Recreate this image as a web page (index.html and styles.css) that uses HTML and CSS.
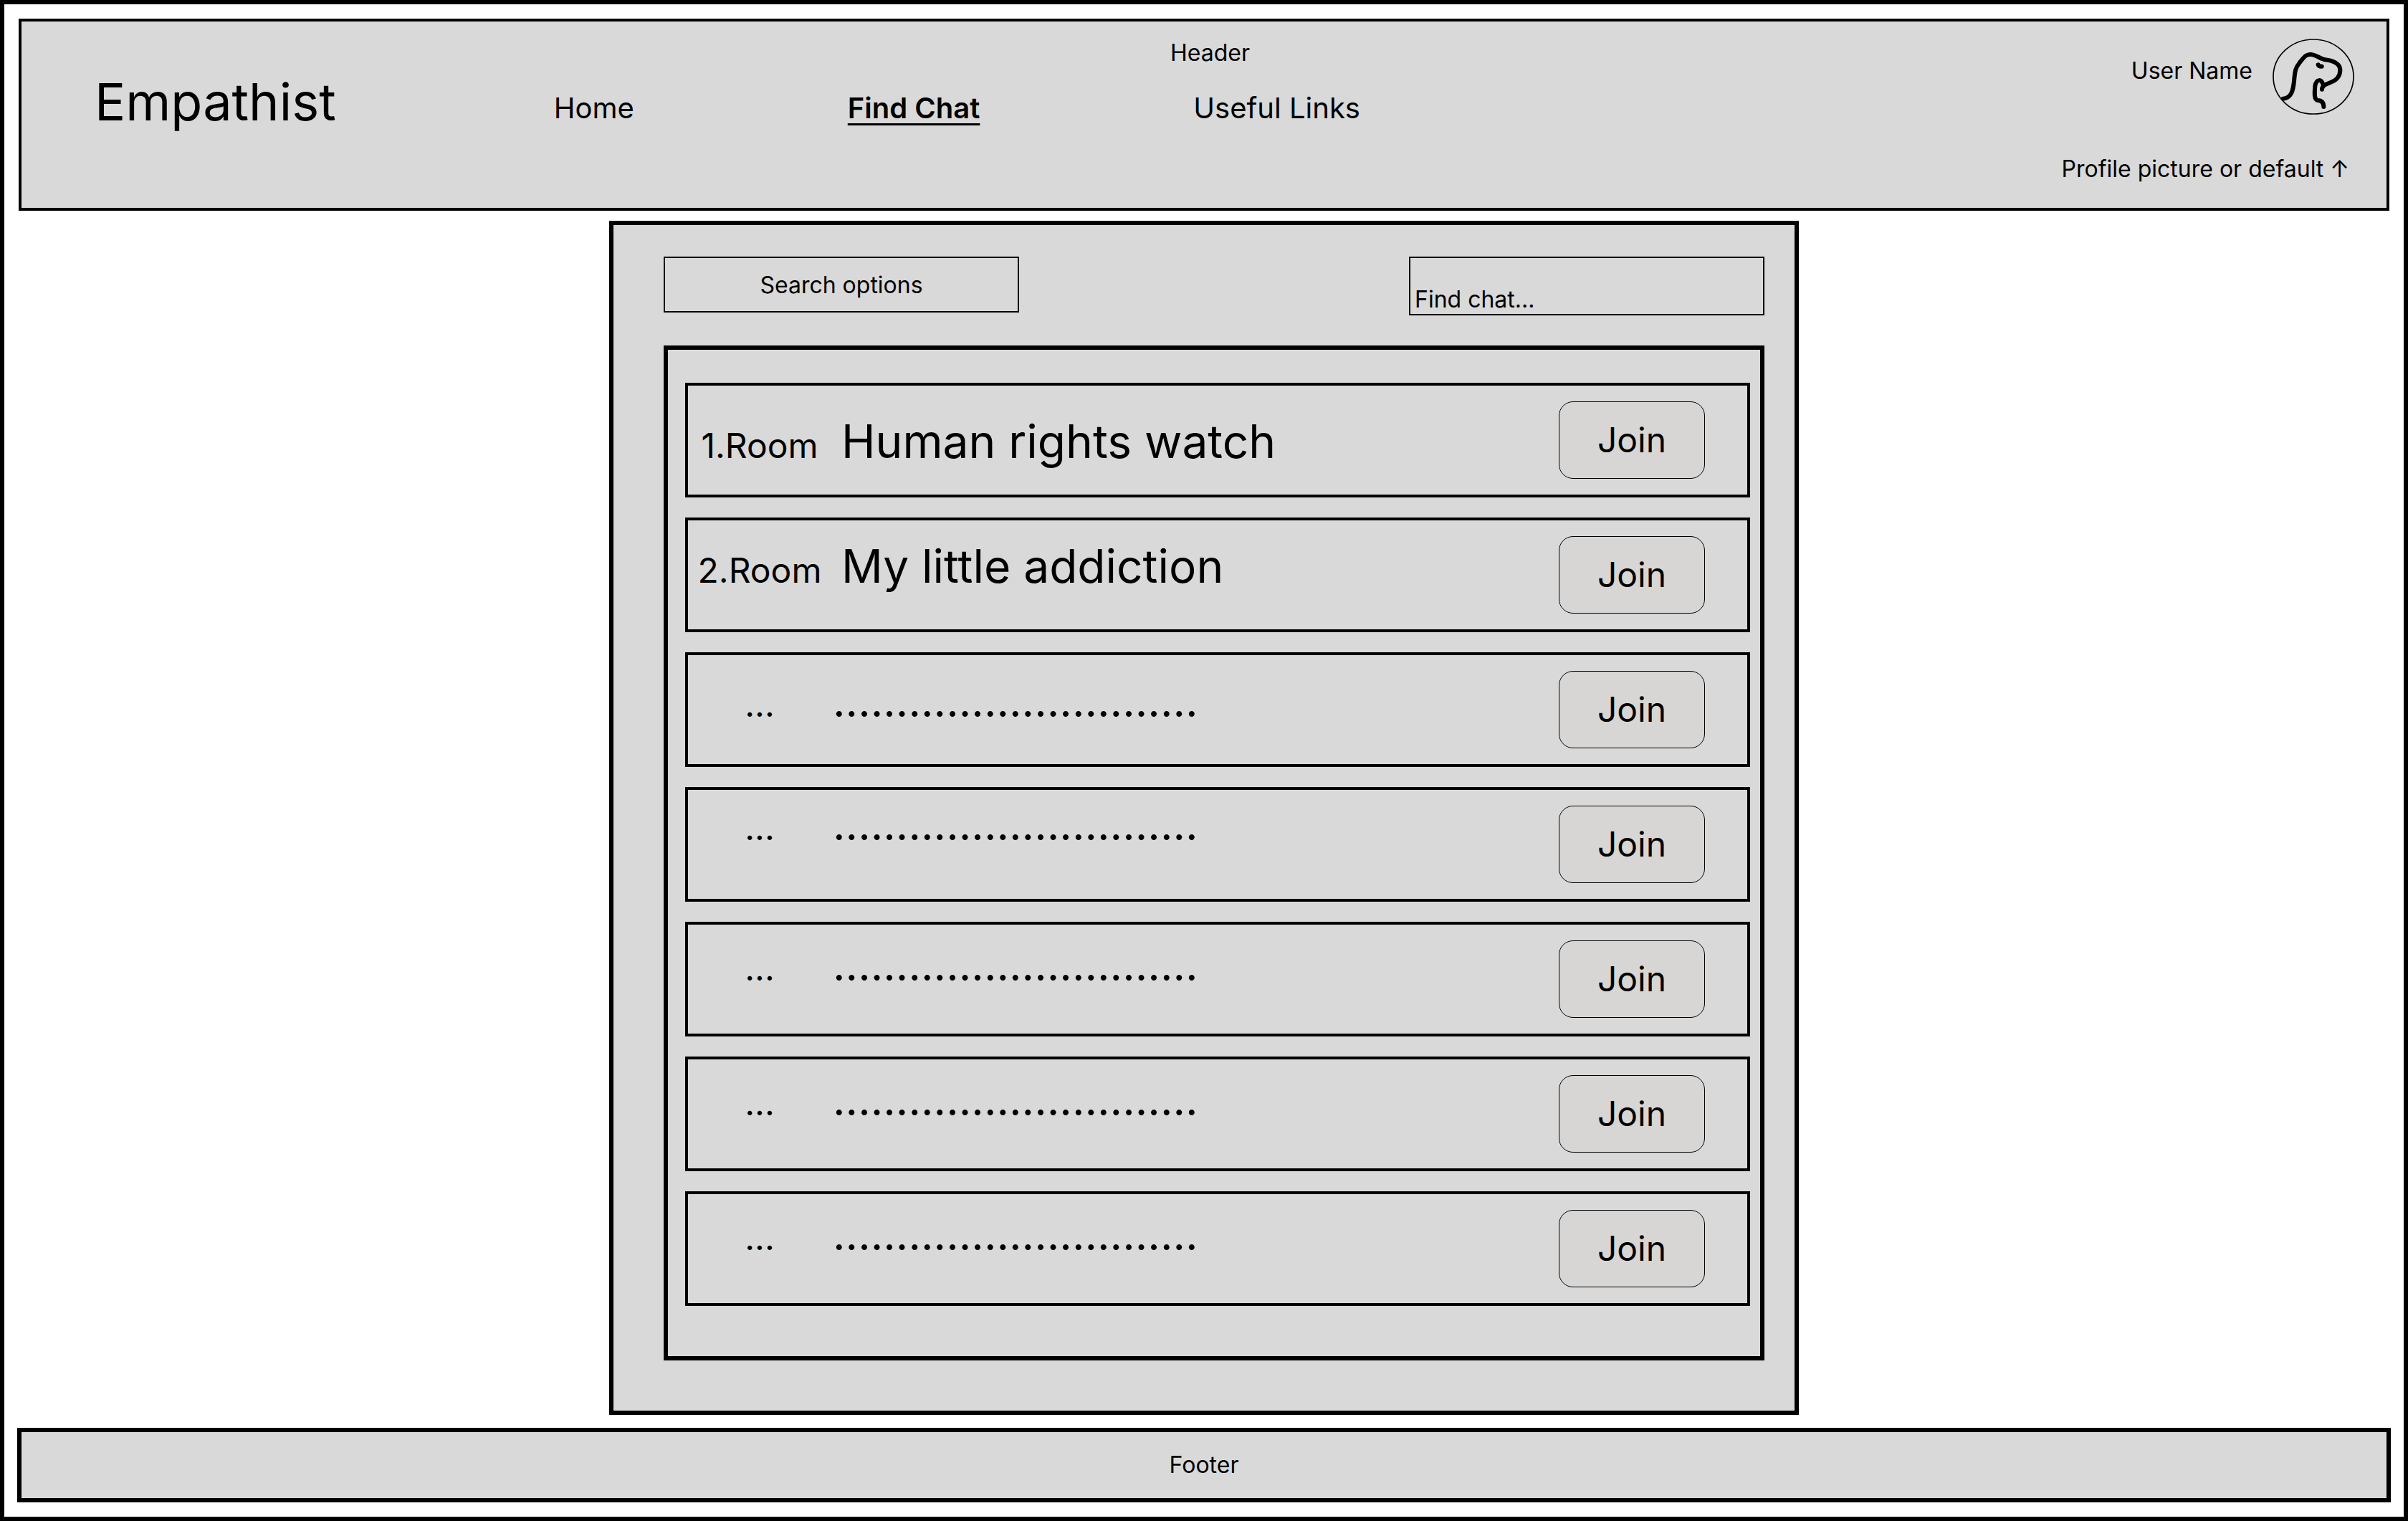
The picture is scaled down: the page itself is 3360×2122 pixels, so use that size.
FILE: index.html
```html
<!DOCTYPE html>
<html lang="en">
<head>
  <meta charset="utf-8">
  <meta name="viewport" content="width=device-width, initial-scale=1">
  <title>Empathist – Find Chat</title>
  <link rel="stylesheet" href="styles.css">
</head>
<body class="page">
  <header class="header">
    <span class="header-label">Header</span>
    <div class="header-main">
      <span class="brand">Empathist</span>
      <nav class="nav">
        <a class="nav-link" href="#home">Home</a>
        <a class="nav-link nav-link-current" href="#find-chat" aria-current="page">Find Chat</a>
        <a class="nav-link" href="#links">Useful Links</a>
      </nav>
    </div>
    <div class="profile">
      <div class="profile-user">
        <span class="profile-name">User Name</span>
        <svg class="avatar" viewBox="94 72 342 318" role="img" aria-label="Profile picture">
          <ellipse cx="265" cy="231" rx="168" ry="156" fill="none" stroke="#000" stroke-width="5"/>
          <g fill="none" stroke="#000" stroke-width="18" stroke-linecap="round" stroke-linejoin="round">
            <path d="M138 323C173 321 180 288 184 250C188 205 190 194 206 174C229 143 238 136 256 138C276 140 294 156 314 160C334 162 344 164 360 174C376 184 380 202 374 222C362 252 334 254 310 267C304 272 301 276 301 284"/>
            <path d="M304 260C299 240 277 240 272 270C269 305 268 328 284 330C301 331 308 342 308 357"/>
            <path d="M285 181Q287 188 300 188"/>
          </g>
        </svg>
      </div>
      <span class="profile-caption">Profile picture or default ↑</span>
    </div>
  </header>

  <main class="panel">
    <div class="toolbar">
      <button class="search-options" type="button">Search options</button>
      <input class="search-input" type="text" placeholder="Find chat..." aria-label="Find chat">
    </div>
    <ul class="rooms">
      <li class="room">
        <div class="room-title">
          <span class="room-number">1.Room</span>
          <span class="room-name">Human rights watch</span>
        </div>
        <button class="join" type="button">Join</button>
      </li>
      <li class="room room-raised">
        <div class="room-title">
          <span class="room-number">2.Room</span>
          <span class="room-name">My little addiction</span>
        </div>
        <button class="join" type="button">Join</button>
      </li>
      <li class="room room-empty room-raised">
        <div class="room-title">
          <span class="room-number">...</span>
          <span class="room-name">.............................</span>
        </div>
        <button class="join" type="button">Join</button>
      </li>
      <li class="room room-empty room-top">
        <div class="room-title">
          <span class="room-number">...</span>
          <span class="room-name">.............................</span>
        </div>
        <button class="join" type="button">Join</button>
      </li>
      <li class="room room-empty room-high">
        <div class="room-title">
          <span class="room-number">...</span>
          <span class="room-name">.............................</span>
        </div>
        <button class="join" type="button">Join</button>
      </li>
      <li class="room room-empty room-high">
        <div class="room-title">
          <span class="room-number">...</span>
          <span class="room-name">.............................</span>
        </div>
        <button class="join" type="button">Join</button>
      </li>
      <li class="room room-empty room-high">
        <div class="room-title">
          <span class="room-number">...</span>
          <span class="room-name">.............................</span>
        </div>
        <button class="join" type="button">Join</button>
      </li>
    </ul>
  </main>

  <footer class="footer">Footer</footer>
</body>
</html>
```
FILE: styles.css
```css
* {
  box-sizing: border-box;
}

.page {
  display: flex;
  flex-direction: column;
  min-height: 100vh;
  margin: 0;
  padding: 20px 18px;
  border: 6px solid #000;
  background: #fff;
  color: #000;
  font-family: Inter, "Liberation Sans", sans-serif;
  font-size: 32px;
  line-height: 40px;
}

button,
input {
  margin: 0;
  border-radius: 0;
  color: inherit;
  font: inherit;
}

/* Header */
.header {
  display: grid;
  grid-template-columns: 1fr auto;
  margin: 0 2px 14px;
  padding: 24px 45px 34px 102px;
  border: 4px solid #000;
  background: #d9d9d9;
}

.header-label {
  grid-area: 1 / 1 / 2 / 3;
  justify-self: center;
  padding-right: 40px;
}

.header-main {
  grid-area: 1 / 1 / 2 / 2;
  display: flex;
  align-items: flex-start;
  gap: 304px;
  padding-top: 44px;
}

.brand {
  font-size: 72px;
  line-height: 88px;
}

.nav {
  display: flex;
  gap: 298px;
  padding-top: 29px;
  font-size: 40px;
  line-height: 48px;
}

.nav-link {
  color: inherit;
  text-decoration: none;
}

.nav-link-current {
  font-weight: 600;
  text-decoration: underline 3px;
  text-decoration-skip-ink: none;
  text-underline-offset: 7px;
}

.profile {
  grid-area: 1 / 2 / 2 / 3;
  display: flex;
  flex-direction: column;
  align-items: flex-end;
  gap: 56px;
}

.profile-user {
  display: flex;
  align-items: flex-start;
  gap: 28px;
}

.profile-name {
  padding-top: 25px;
}

.avatar {
  width: 114px;
  height: 106px;
}

.profile-caption {
  padding-right: 7px;
}

/* Chat panel */
.panel {
  width: 100%;
  max-width: 1660px;
  margin: 0 auto 18px;
  padding: 44px 42px 70px 70px;
  border: 6px solid #000;
  background: #d9d9d9;
}

.toolbar {
  display: flex;
  align-items: flex-start;
  justify-content: space-between;
  gap: 40px;
  margin-bottom: 42px;
}

.search-options,
.search-input {
  width: 496px;
  border: 2px solid #000;
  background: transparent;
}

.search-options {
  padding: 18px 16px 16px;
}

.search-input {
  padding: 38px 6px 0;
  line-height: 40px;
}

.search-input::placeholder {
  color: #000;
  opacity: 1;
}

.rooms {
  display: flex;
  flex-direction: column;
  gap: 28px;
  margin: 0;
  padding: 46px 14px 70px 24px;
  border: 6px solid #000;
  list-style: none;
}

.room {
  display: flex;
  align-items: flex-start;
  justify-content: space-between;
  padding: 22px 59px 22px 0;
  border: 4px solid #000;
}

/* The top margin sets how high the title sits in its row */
.room-title {
  display: flex;
  align-items: baseline;
  gap: 14px;
  margin-top: 24px;
  line-height: 64px;
}

.room-raised .room-title {
  margin-top: 10px;
}

.room-high .room-title {
  margin-top: 2px;
}

.room-top .room-title {
  margin-top: -6px;
}

.room-number {
  width: 200px;
  font-size: 48px;
  text-align: center;
}

.room-name {
  font-size: 64px;
}

.room-empty .room-title {
  gap: 2px;
}

.room-empty .room-name {
  font-size: 61px;
}

.join {
  width: 204px;
  padding: 24px 0;
  border: 1px solid #000;
  border-radius: 20px;
  background: #d7d6d4;
  font-size: 48px;
  line-height: 58px;
}

/* Footer */
.footer {
  padding: 26px 20px;
  border: 6px solid #000;
  background: #d9d9d9;
  text-align: center;
}
```
